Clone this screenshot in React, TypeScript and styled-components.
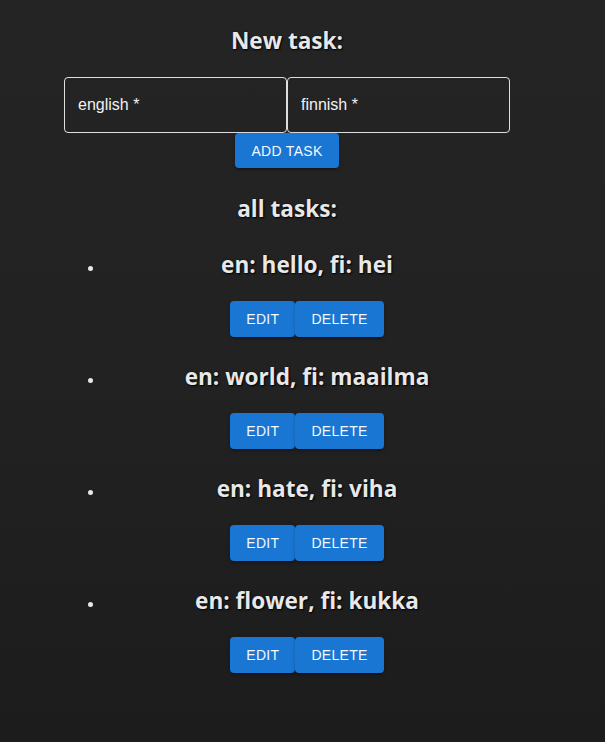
import React from "react";
import styled, { createGlobalStyle } from "styled-components";

const GlobalStyle = createGlobalStyle`
  html, body {
    margin: 0;
    padding: 0;
    min-height: 100%;
  }
  body {
    background: linear-gradient(180deg, #242424 0%, #222222 50%, #1c1c1c 100%);
    min-height: 742px;
    color: rgba(255, 255, 255, 0.87);
    font-family: "Liberation Sans", Arial, sans-serif;
  }
`;

const Page = styled.div`
  width: 574px;
  display: flex;
  justify-content: center;
`;

const Container = styled.div`
  width: 446px;
  display: flex;
  flex-direction: column;
  align-items: center;
`;

const Heading = styled.h2<{ $top: number }>`
  margin: ${(p) => p.$top}px 0 0;
  padding-top: 4px;
  font-family: "Open Sans", "DejaVu Sans", sans-serif;
  font-weight: 700;
  font-size: 22.6px;
  line-height: 26px;
  color: #e8e8e8;
  text-shadow: 1px 1px 2px #000, 0 0 1px #000;
  text-align: center;
`;

const Form = styled.form`
  margin-top: 23px;
  width: 100%;
  display: flex;
  flex-direction: column;
  align-items: center;
`;

const InputRow = styled.div`
  display: flex;
  width: 100%;
`;

const Field = styled.input`
  box-sizing: border-box;
  width: 223px;
  height: 56px;
  padding: 0 13px;
  background: transparent;
  border: 1px solid rgba(255, 255, 255, 0.85);
  border-radius: 4px;
  font-family: "Liberation Sans", Arial, sans-serif;
  font-size: 16px;
  color: #fff;
  outline: none;
  &::placeholder {
    color: #f2f2f2;
    opacity: 1;
  }
`;

const Button = styled.button`
  height: 36px;
  padding: 0 16px;
  border: none;
  border-radius: 4px;
  background: #1976d2;
  color: #f4f8ff;
  font-family: "Liberation Sans", Arial, sans-serif;
  font-size: 14px;
  font-weight: 400;
  letter-spacing: 0.3px;
  text-transform: uppercase;
  box-shadow: 0 3px 1px -2px rgba(0, 0, 0, 0.2), 0 2px 2px 0 rgba(0, 0, 0, 0.14),
    0 1px 5px 0 rgba(0, 0, 0, 0.12);
  cursor: pointer;
`;

const AddButton = styled(Button)`
  height: 35px;
`;

const TaskList = styled.ul`
  width: 100%;
  box-sizing: border-box;
  margin: 26px 0 0;
  padding: 0 0 0 40px;
  list-style: disc;
  color: #e8e8e8;
`;

const TaskItem = styled.li`
  font-size: 16px;
  margin-bottom: 23px;
`;

const TaskTitle = styled.h3`
  margin: 0;
  padding-top: 4px;
  font-family: "Open Sans", "DejaVu Sans", sans-serif;
  font-weight: 700;
  font-size: 22.6px;
  line-height: 26px;
  color: #e8e8e8;
  text-shadow: 1px 1px 2px #000, 0 0 1px #000;
  text-align: center;
`;

const ButtonGroup = styled.div`
  margin-top: 23px;
  display: flex;
  justify-content: center;
`;

const tasks = [
  { en: "hello", fi: "hei" },
  { en: "world", fi: "maailma" },
  { en: "hate", fi: "viha" },
  { en: "flower", fi: "kukka" },
];

export default function App() {
  return (
    <>
      <GlobalStyle />
      <Page>
        <Container>
          <Heading $top={24}>New task:</Heading>
          <Form onSubmit={(e) => e.preventDefault()}>
            <InputRow>
              <Field placeholder="english *" />
              <Field placeholder="finnish *" />
            </InputRow>
            <AddButton type="submit">Add task</AddButton>
          </Form>
          <Heading $top={24}>all tasks:</Heading>
          <TaskList>
            {tasks.map((t) => (
              <TaskItem key={t.en}>
                <TaskTitle>
                  en: {t.en}, fi: {t.fi}
                </TaskTitle>
                <ButtonGroup>
                  <Button>Edit</Button>
                  <Button>Delete</Button>
                </ButtonGroup>
              </TaskItem>
            ))}
          </TaskList>
        </Container>
      </Page>
    </>
  );
}
